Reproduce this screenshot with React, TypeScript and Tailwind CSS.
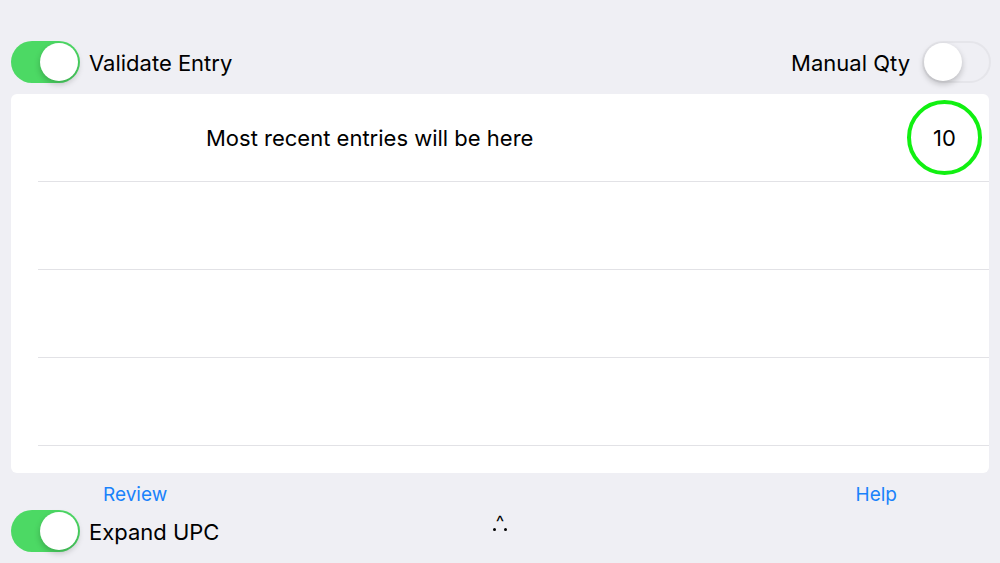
import React from 'react';

function Toggle({ on }: { on: boolean }) {
  return (
    <div
      className={
        on
          ? 'flex h-[42px] w-[69px] items-center justify-end rounded-full bg-[#4cd964] p-[2px]'
          : 'flex h-[42px] w-[69px] items-center justify-start rounded-full border-2 border-[#e5e5ea] bg-[#efeff4] p-0'
      }
    >
      <div className="h-[38px] w-[38px] rounded-full bg-white shadow-[0_3px_6px_rgba(0,0,0,0.22)]" />
    </div>
  );
}

export default function App() {
  const rows = [0, 1, 2, 3];

  return (
    <div className="flex h-[563px] w-[1000px] flex-col bg-[#efeff4] px-[11px] font-['Inter','Liberation_Sans',sans-serif] text-black">
      {/* top toggles */}
      <div className="mt-[41px] flex h-[42px] items-center justify-between">
        <div className="flex items-center gap-[9px]">
          <Toggle on />
          <span className="pt-[2px] text-[22px]">Validate Entry</span>
        </div>
        <div className="mr-[-2px] flex items-center gap-[12px]">
          <span className="pt-[2px] text-[22px]">Manual Qty</span>
          <Toggle on={false} />
        </div>
      </div>

      {/* entries card */}
      <div className="mt-[11px] flex h-[379px] flex-col rounded-[6px] bg-white">
        {rows.map((r) => (
          <div key={r} className="ml-[27px] flex h-[88px] items-center border-b border-[#e2e2e6]">
            {r === 0 && (
              <div className="flex w-full items-center justify-between pl-[168px] pr-[7px]">
                <span className="pt-[2px] text-[22px]">Most recent entries will be here</span>
                <div className="flex h-[75px] w-[75px] items-center justify-center rounded-full border-[4px] border-[#11f011] pt-[1px] text-[22px]">
                  10
                </div>
              </div>
            )}
          </div>
        ))}
      </div>

      {/* links */}
      <div className="mt-[10px] flex h-6 items-center justify-between px-[92px] text-[19px] text-[#1a82fb]">
        <span>Review</span>
        <span>Help</span>
      </div>

      {/* bottom row */}
      <div className="mt-[3px] grid h-[42px] grid-cols-[1fr_auto_1fr] items-center">
        <div className="flex items-center gap-[9px]">
          <Toggle on />
          <span className="pt-[2px] text-[22px]">Expand UPC</span>
        </div>
        <div className="mb-[16px] flex flex-col items-center leading-none">
          <span className="text-[18px] leading-[12px]">^</span>
          <span className="flex gap-[8px]">
            <span className="h-[3px] w-[3px] rounded-full bg-black" />
            <span className="h-[3px] w-[3px] rounded-full bg-black" />
          </span>
        </div>
        <div />
      </div>
    </div>
  );
}
